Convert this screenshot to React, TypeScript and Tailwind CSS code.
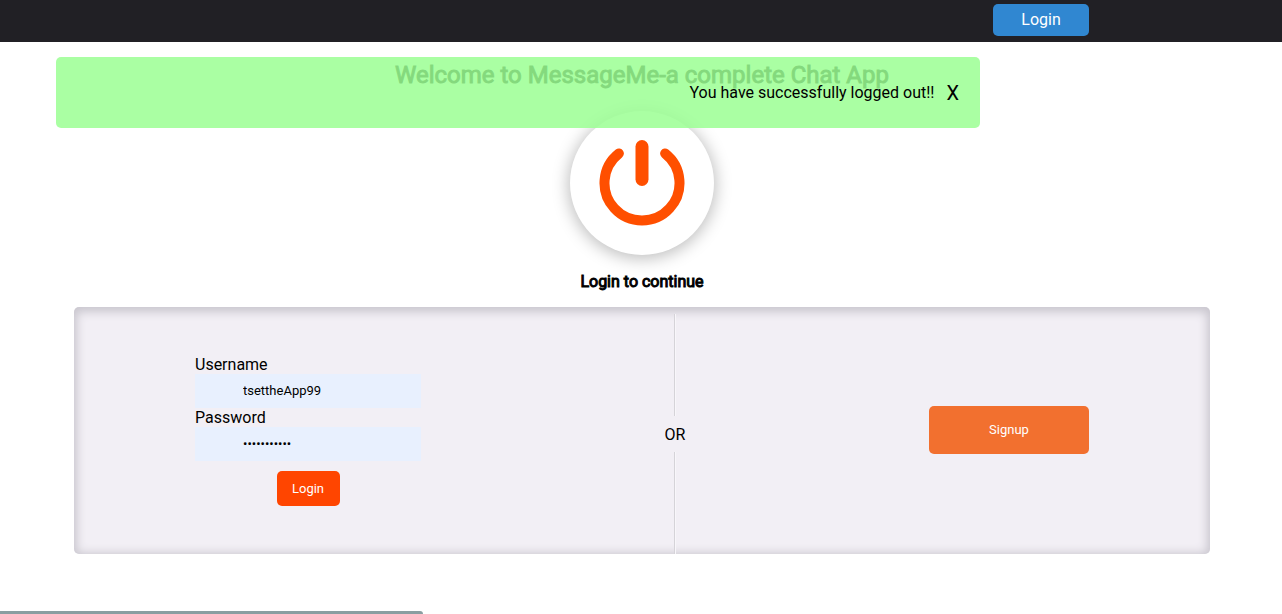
import { useState } from "react";

function PowerIcon() {
  return (
    <svg viewBox="0 0 86 86" className="size-[86px]" fill="none" stroke="#ff4f00" strokeLinecap="round" aria-hidden="true">
      <path d="M19.9 13.5 A37.5 37.5 0 1 0 66.1 13.5" strokeWidth="10" />
      <path d="M43 6.5 V39.5" strokeWidth="13" />
    </svg>
  );
}

function Header() {
  return (
    <header className="flex h-[42px] items-center justify-end bg-[#212025] pr-[193px] pb-[2px]">
      <button type="button" className="h-8 w-24 rounded-[5px] bg-[#3087d1] text-base text-white">
        Login
      </button>
    </header>
  );
}

function Alert({ onClose }: { onClose: () => void }) {
  return (
    <div
      role="alert"
      className="absolute top-[57px] right-[302px] left-14 flex h-[71px] items-center justify-end gap-3 rounded-[5px] bg-[#9bff93]/85 pr-[21px]"
    >
      <span className="text-base">You have successfully logged out!!</span>
      <button type="button" aria-label="Close" className="text-xl" onClick={onClose}>
        X
      </button>
    </div>
  );
}

function Field({ id, label, type, value }: { id: string; label: string; type: string; value: string }) {
  return (
    <>
      <label htmlFor={id} className="block leading-[19px]">
        {label}
      </label>
      <input
        id={id}
        type={type}
        defaultValue={value}
        className="block h-[34px] w-full bg-[#e8f0fe] px-12 pb-[2px] text-[13px] text-black outline-none"
      />
    </>
  );
}

export default function App() {
  const [alertOpen, setAlertOpen] = useState(true);
  return (
    <div className="relative min-h-screen overflow-hidden bg-white font-['Roboto',sans-serif] text-base text-black">
      <Header />
      <main className="flex flex-col pt-[19px]">
        <div className="flex flex-col items-center pl-[2px]">
          <h1 className="text-2xl leading-7 font-normal [-webkit-text-stroke:1px_black]">
            Welcome to MessageMe-a complete Chat App
          </h1>
          <div className="mt-[22px] flex size-36 items-center justify-center rounded-full bg-white shadow-[0_2px_16px_2px_rgba(0,0,0,0.25)]">
            <PowerIcon />
          </div>
          <h2 className="mt-[17px] leading-[19px] font-normal [-webkit-text-stroke:1px_black]">Login to continue</h2>
        </div>
        <section className="mt-4 mr-[72px] ml-[74px] grid grid-cols-[468fr_266fr_402fr] rounded-[5px] bg-[#f2eff5] shadow-[inset_0_2px_10px_3px_#c9c6ce]">
          <form className="flex w-[226px] flex-col justify-self-center py-12" onSubmit={(e) => e.preventDefault()}>
            <Field id="username" label="Username" type="text" value="tsettheApp99" />
            <Field id="password" label="Password" type="password" value="secretpass1" />
            <button type="submit" className="mt-[10px] h-[35px] w-[63px] self-center rounded-[5px] bg-[#ff4500] text-[13px] text-white">
              Login
            </button>
          </form>
          <div className="flex flex-col items-center pt-[7px]">
            <div className="w-[2px] flex-1 border-r border-l border-r-[#f8f6fa] border-l-[#d5d3d8]" />
            <span className="pt-[9px] pb-[7px] leading-5">OR</span>
            <div className="w-[2px] flex-1 border-r border-l border-r-[#f8f6fa] border-l-[#d5d3d8]" />
          </div>
          <div className="flex items-center justify-center pb-[2px]">
            <button type="button" className="h-12 w-40 rounded-[5px] bg-[#f2702f] text-[13px] text-white">
              Signup
            </button>
          </div>
        </section>
      </main>
      {alertOpen && <Alert onClose={() => setAlertOpen(false)} />}
      <div className="absolute bottom-0 left-0 h-[3px] w-[33%] rounded-tr-[3px] bg-[#8a9ea1]" />
    </div>
  );
}
